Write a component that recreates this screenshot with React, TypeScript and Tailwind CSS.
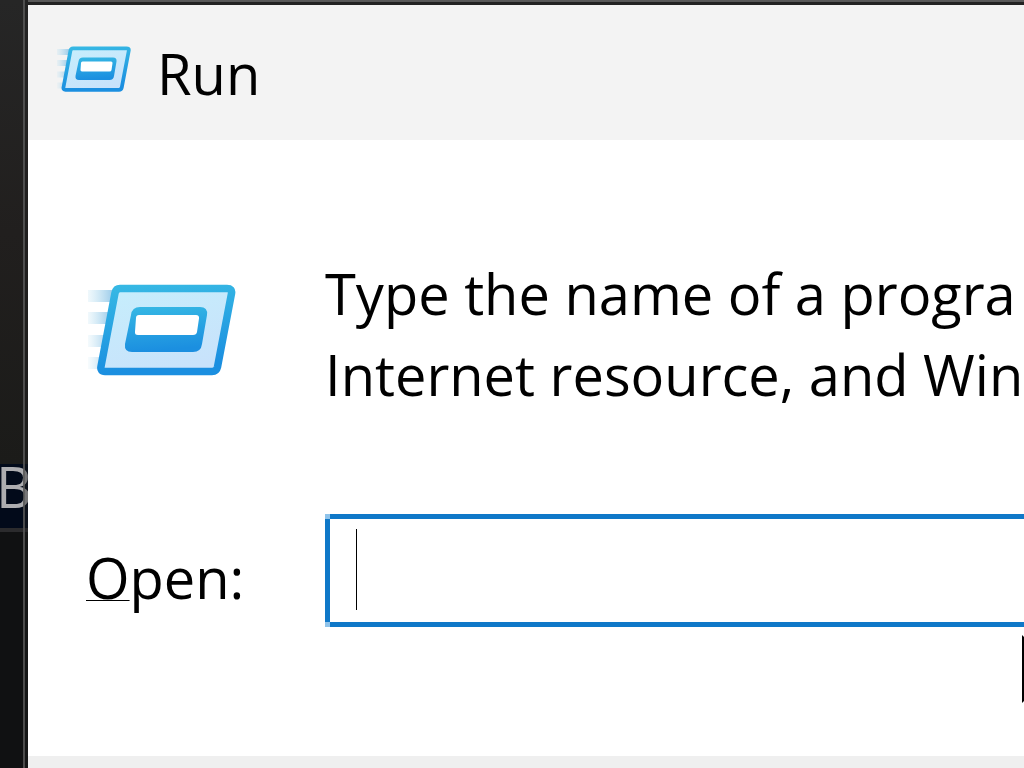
import React, { useId } from 'react';

const RunIcon = ({ className }: { className?: string }) => {
  const id = useId();

  return (
    <svg className={className} viewBox="0 0 148 92" fill="none" aria-hidden="true">
      <defs>
        <linearGradient id={`${id}-frame`} x1="0" y1="0" x2="0.15" y2="1">
          <stop offset="0" stopColor="#36b8e4" />
          <stop offset="1" stopColor="#1b8fe0" />
        </linearGradient>
        <linearGradient id={`${id}-panel`} x1="0.1" y1="0" x2="0.6" y2="1">
          <stop offset="0" stopColor="#c6eefc" />
          <stop offset="1" stopColor="#c8e2fb" />
        </linearGradient>
        <linearGradient id={`${id}-streak`} x1="0" y1="0" x2="1" y2="0">
          <stop offset="0" stopColor="#b4def0" stopOpacity="0.2" />
          <stop offset="1" stopColor="#93c6e8" />
        </linearGradient>
      </defs>
      <rect x="0" y="6" width="27" height="12" fill={`url(#${id}-streak)`} />
      <rect x="0" y="28" width="22" height="12" fill={`url(#${id}-streak)`} opacity="0.9" />
      <rect x="0" y="51" width="18" height="12" fill={`url(#${id}-streak)`} opacity="0.7" />
      <rect x="0" y="73" width="14" height="12" fill={`url(#${id}-streak)`} opacity="0.5" />
      <path
        d="M32 4.500H139Q144.500 4.500 143.500 9.500L129.500 83Q128.500 87.500 124 87.500H17Q12 87.500 13 82.500L27 9Q28 4.500 32 4.500Z"
        fill={`url(#${id}-panel)`}
        stroke={`url(#${id}-frame)`}
        strokeWidth="7.5"
      />
      <path
        d="M52 23H112Q120 23 119 31L114 60Q113 68 105 68H44Q36 68 37 60L43 31Q44 23 52 23Z"
        fill={`url(#${id}-frame)`}
      />
      <path
        d="M51 31H108Q111.500 31 111 34.500L109 48Q108.500 51 105 51H50Q46.500 51 47 47.500L48 34Q48 31 51 31Z"
        fill="#ffffff"
      />
    </svg>
  );
};

// Sliver of the dark window that sits behind the dialog
const Backdrop = () => (
  <div className="flex w-7 shrink-0 flex-col overflow-hidden bg-[#121212]">
    <div className="h-[464px] shrink-0 bg-linear-to-b from-[#262626] via-[#211f1e] to-[#1b1b19]" />
    <div className="-indent-1 h-16 shrink-0 bg-[#020a1a] text-[56px] leading-[44px] text-[#adadb0]">B</div>
    <div className="h-1 shrink-0 bg-[#2b2b2d]" />
    <div className="flex-1 bg-[#101112]" />
  </div>
);

const TitleBar = () => (
  <header className="flex h-[135px] shrink-0 items-center gap-[26px] bg-[#f3f3f3] pl-[29px]">
    <RunIcon className="mb-2 h-[46px] w-[74px] shrink-0" />
    <h1 className="text-[56px] leading-[80px]">Run</h1>
  </header>
);

const App = () => {
  const [command, setCommand] = React.useState('');

  return (
    <div className="relative flex min-h-screen overflow-hidden bg-[#121212] font-['Open_Sans','Noto_Sans',sans-serif] text-black">
      <Backdrop />

      {/* Window edge, translucent over the backdrop */}
      <div className="absolute inset-y-0 left-[23px] w-[5px] border-l-2 border-[#5a5a5a]/80 bg-[#202020]/40" />

      <main className="flex min-w-0 flex-1 flex-col bg-white">
        <div className="h-[5px] shrink-0 border-t-2 border-[#585858] bg-[#222222]" />
        <TitleBar />

        <section className="flex-1 pt-[113px] pl-[58px]">
          <div className="flex items-start">
            <div className="w-[239px] shrink-0 pt-[31px] pl-0.5">
              <RunIcon className="h-[92px] w-[148px]" />
            </div>
            <p className="min-w-0 flex-1 overflow-hidden text-[56px] leading-[81px] whitespace-nowrap">
              Type the name of a progra
              <br />
              Internet resource, and Win
            </p>
          </div>

          <div className="mt-[99px] flex items-center">
            <label htmlFor="command" className="w-[239px] shrink-0 pt-3 text-[56px] leading-[80px]">
              <span className="underline decoration-1 underline-offset-1">O</span>pen:
            </label>
            <div className="relative min-w-0 flex-1">
              <input
                id="command"
                type="text"
                value={command}
                onChange={(e) => setCommand(e.target.value)}
                className="block h-[113px] w-full border-y-[5px] border-l-[5px] border-[#0f78c8] bg-white px-[26px] text-[56px] outline-none"
              />
              <span className="absolute top-0 left-0 size-[5px] bg-[#8fc3ea]" />
              <span className="absolute bottom-0 left-0 size-[5px] bg-[#8fc3ea]" />
              {/* Text caret */}
              <span className="absolute top-[15px] left-[31px] h-[81px] w-px bg-black" />
              {/* Mouse pointer, mostly past the edge */}
              <svg
                className="absolute top-[121px] -right-[46px] h-[68px] w-12"
                viewBox="0 0 48 68"
                aria-hidden="true"
              >
                <path d="M0 0L48 48H20L2 66L0 68Z" fill="#000000" />
              </svg>
            </div>
          </div>
        </section>

        <footer className="h-3 shrink-0 bg-[#efefef]" />
      </main>
    </div>
  );
};

export default App;
